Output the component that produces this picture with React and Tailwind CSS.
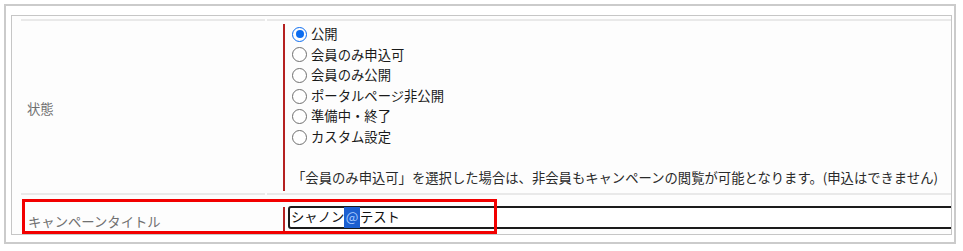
import React from "react";

function Radio({ checked, label }) {
  return (
    <div className="flex items-center h-[20.6px]">
      {checked ? (
        <span className="w-[15px] h-[15px] rounded-full border-[1.5px] border-[#0b6cf0] flex items-center justify-center shrink-0">
          <span className="w-[8px] h-[8px] rounded-full bg-[#0b6cf0]" />
        </span>
      ) : (
        <span className="w-[15px] h-[15px] rounded-full border border-[#6f6f6f] bg-white shrink-0" />
      )}
      <span className="ml-[4px] text-[#1a1a1a]">{label}</span>
    </div>
  );
}

export default function App() {
  const opts = [
    "公開",
    "会員のみ申込可",
    "会員のみ公開",
    "ポータルページ非公開",
    "準備中・終了",
    "カスタム設定",
  ];
  return (
    <div className="w-[963px] h-[251px] bg-white pt-[4px] pl-[4px] text-[13.33px] leading-[20.6px] font-['Noto_Sans_CJK_JP',sans-serif]">
      <div className="relative w-[952px] h-[240px] border-2 border-[#cbcbcb] pt-[9px] pl-[5px]">
        <div className="w-[941px] h-[220px] border border-[#c6c6c6] overflow-hidden pl-[9px] pt-[3px] bg-[#fdfdfd]">
          <div className="grid grid-cols-[244px_1fr] gap-x-[2px]">
            {/* Row 1 */}
            <div className="border-t-2 border-[#e9e9e9] flex items-center pl-[6px] pt-[4px] text-[#707070]">
              状態
            </div>
            <div className="border-t-2 border-[#e9e9e9] pt-[3px] pl-[16px] pb-[2px]">
              <div className="border-l-2 border-[#b52121] pl-[7px] pb-[2px]">
                {opts.map((o, i) => (
                  <Radio key={o} checked={i === 0} label={o} />
                ))}
                <div className="h-[20.6px]" />
                <div className="text-[#2a2a2a] whitespace-nowrap">
                  「会員のみ申込可」を選択した場合は、非会員もキャンペーンの閲覧が可能となります。(申込はできません)
                </div>
              </div>
            </div>
            {/* Row 2 */}
            <div className="border-t-2 border-[#e9e9e9] pl-[7px] pt-[17px] h-[42px] text-[#707070]">
              キャンペーンタイトル
            </div>
            <div className="border-t-2 border-[#e9e9e9] pt-[11px] pl-[16px] h-[42px] flex">
              <div className="w-[2px] h-[26px] mt-[1px] bg-[#b52121] shrink-0" />
              <div className="ml-[3px] w-[700px] h-[23px] border-2 border-[#1b1b1b] rounded-[3px] bg-white flex items-center pl-[1px] shrink-0 text-[#111]">
                <span>シャノン</span>
                <span className="bg-[#1c5fd0] text-[#a9ccff] px-[1.5px]">@</span>
                <span>テスト</span>
              </div>
            </div>
          </div>
        </div>
        <div className="absolute left-[16px] top-[193px] w-[475px] h-[35px] border-[3px] border-[#f20000]" />
      </div>
    </div>
  );
}
